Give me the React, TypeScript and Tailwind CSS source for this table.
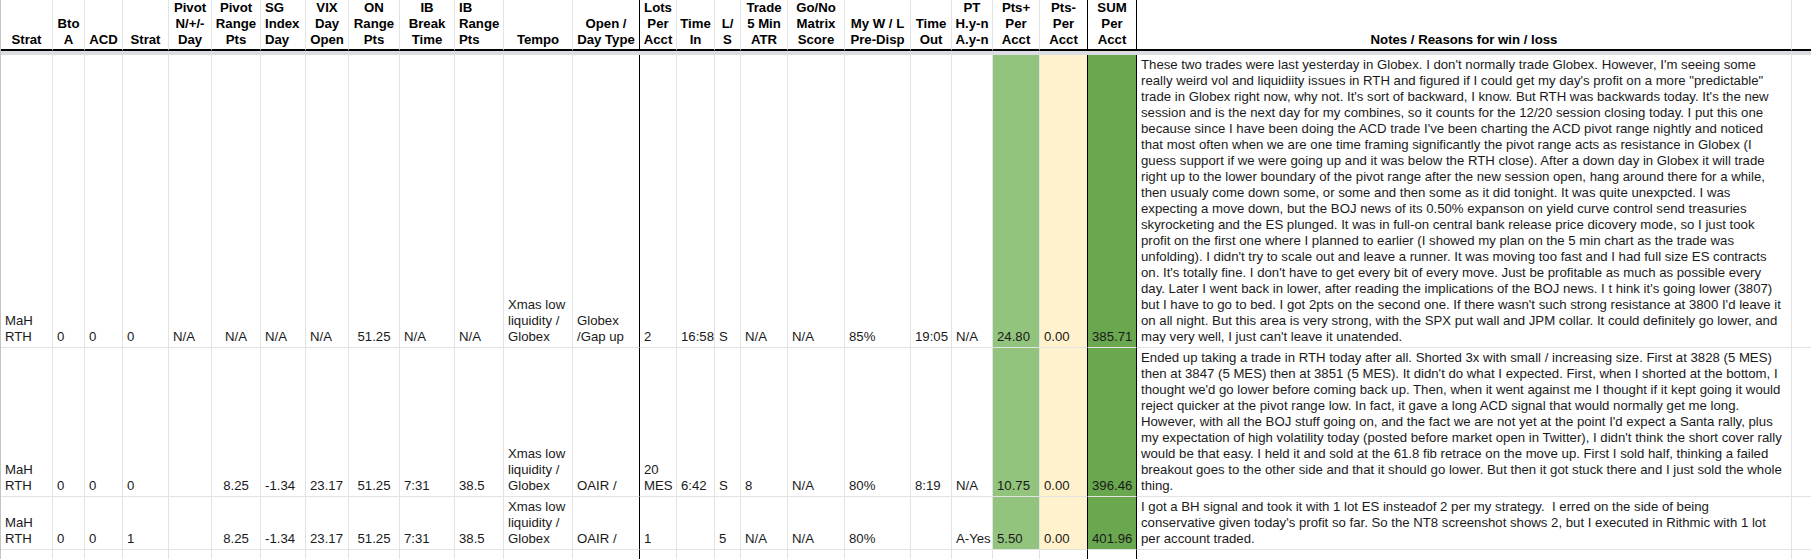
import React from "react";

const colW = [
  "w-[52px]", "w-[32px]", "w-[38px]", "w-[46px]", "w-[43px]", "w-[49px]", "w-[45px]", "w-[43px]",
  "w-[51px]", "w-[55px]", "w-[49px]", "w-[69px]", "w-[67px]", "w-[37px]", "w-[38px]", "w-[26px]",
  "w-[47px]", "w-[57px]", "w-[66px]", "w-[41px]", "w-[41px]", "w-[47px]", "w-[48px]", "w-[49px]",
  "w-[655px]", "w-[20px]",
];

const headers: string[][] = [
  ["Strat"], ["Bto", "A"], ["ACD"], ["Strat"], ["Pivot", "N/+/-", "Day"], ["Pivot", "Range", "Pts"],
  ["SG", "Index", "Day"], ["VIX", "Day", "Open"], ["ON", "Range", "Pts"], ["IB", "Break", "Time"],
  ["IB", "Range", "Pts"], ["Tempo"], ["Open /", "Day Type"], ["Lots", "Per", "Acct"], ["Time", "In"],
  ["L/", "S"], ["Trade", "5 Min", "ATR"], ["Go/No", "Matrix", "Score"], ["My W / L", "Pre-Disp"],
  ["Time", "Out"], ["PT", "H.y-n", "A.y-n"], ["Pts+", "Per", "Acct"], ["Pts-", "Per", "Acct"],
  ["SUM", "Per", "Acct"], ["Notes / Reasons for win / loss"], [],
];

const xmas = ["Xmas low", "liquidity /", "Globex"];

const notes1 = [
  "These two trades were last yesterday in Globex. I don't normally trade Globex. However, I'm seeing some",
  'really weird vol and liquidiity issues in RTH and figured if I could get my day\'s profit on a more "predictable"',
  "trade in Globex right now, why not. It's sort of backward, I know. But RTH was backwards today. It's the new",
  "session and is the next day for my combines, so it counts for the 12/20 session closing today. I put this one",
  "because since I have been doing the ACD trade I've been charting the ACD pivot range nightly and noticed",
  "that most often when we are one time framing significantly the pivot range acts as resistance in Globex (I",
  "guess support if we were going up and it was below the RTH close). After a down day in Globex it will trade",
  "right up to the lower boundary of the pivot range after the new session open, hang around there for a while,",
  "then usualy come down some, or some and then some as it did tonight. It was quite unexpcted. I was",
  "expecting a move down, but the BOJ news of its 0.50% expanson on yield curve control send treasuries",
  "skyrocketing and the ES plunged. It was in full-on central bank release price dicovery mode, so I just took",
  "profit on the first one where I planned to earlier (I showed my plan on the 5 min chart as the trade was",
  "unfolding). I didn't try to scale out and leave a runner. It was moving too fast and I had full size ES contracts",
  "on. It's totally fine. I don't have to get every bit of every move. Just be profitable as much as possible every",
  "day. Later I went back in lower, after reading the implications of the BOJ news. I t hink it's going lower (3807)",
  "but I have to go to bed. I got 2pts on the second one. If there wasn't such strong resistance at 3800 I'd leave it",
  "on all night. But this area is very strong, with the SPX put wall and JPM collar. It could definitely go lower, and",
  "may very well, I just can't leave it unatended.",
];

const notes2 = [
  "Ended up taking a trade in RTH today after all. Shorted 3x with small / increasing size. First at 3828 (5 MES)",
  "then at 3847 (5 MES) then at 3851 (5 MES). It didn't do what I expected. First, when I shorted at the bottom, I",
  "thought we'd go lower before coming back up. Then, when it went against me I thought if it kept going it would",
  "reject quicker at the pivot range low. In fact, it gave a long ACD signal that would normally get me long.",
  "However, with all the BOJ stuff going on, and the fact we are not yet at the point I'd expect a Santa rally, plus",
  "my expectation of high volatility today (posted before market open in Twitter), I didn't think the short cover rally",
  "would be that easy. I held it and sold at the 61.8 fib retrace on the move up. First I sold half, thinking a failed",
  "breakout goes to the other side and that it should go lower. But then it got stuck there and I just sold the whole",
  "thing.",
];

const notes3 = [
  "I got a BH signal and took it with 1 lot ES insteadof 2 per my strategy.  I erred on the side of being",
  "conservative given today's profit so far. So the NT8 screenshot shows 2, but I executed in Rithmic with 1 lot",
  "per account traded.",
];

type Cell = string | string[];

const rows: Cell[][] = [
  [
    ["MaH", "RTH"], "0", "0", "0", "N/A", "N/A", "N/A", "N/A", "51.25", "N/A", "N/A", xmas,
    ["Globex", "/Gap up"], "2", "16:58", "S", "N/A", "N/A", "85%", "19:05", "N/A", "24.80", "0.00",
    "385.71", notes1, "",
  ],
  [
    ["MaH", "RTH"], "0", "0", "0", "", "8.25", "-1.34", "23.17", "51.25", "7:31", "38.5", xmas,
    "OAIR /", ["20", "MES"], "6:42", "S", "8", "N/A", "80%", "8:19", "N/A", "10.75", "0.00",
    "396.46", notes2, "",
  ],
  [
    ["MaH", "RTH"], "0", "0", "1", "", "8.25", "-1.34", "23.17", "51.25", "7:31", "38.5", xmas,
    "OAIR /", "1", "", "5", "N/A", "N/A", "80%", "", "A-Yes", "5.50", "0.00", "401.96", notes3, "",
  ],
];

function rightBorder(i: number) {
  return i === 12 || i === 22 || i === 23 ? "border-r-black" : "border-r-[#e2e3e3]";
}

function bodyBg(i: number) {
  if (i === 21) return "bg-[#93c47d]";
  if (i === 22) return "bg-[#fff2cc]";
  if (i === 23) return "bg-[#6aa84f]";
  return "";
}

function Lines({ v }: { v: Cell }) {
  if (Array.isArray(v)) {
    return (
      <>
        {v.map((l, k) => (
          <div key={k} className="whitespace-pre">
            {l}
          </div>
        ))}
      </>
    );
  }
  return <div className="whitespace-pre">{v}</div>;
}

export default function App() {
  return (
    <div className="w-[1811px] h-[559px] overflow-hidden bg-white font-['Liberation_Sans',Arial,sans-serif] text-[13.2px] leading-[16px] text-[#1a1a1a]">
      <table className="table-fixed border-separate border-spacing-0 w-[1811px] border-l border-l-[#c4c4c4]">
        <colgroup>
          {colW.map((c, i) => (
            <col key={i} className={c} />
          ))}
        </colgroup>
        <thead>
          <tr className="h-[50px]">
            {headers.map((h, i) => (
              <th
                key={i}
                className={`border-r border-b-2 ${rightBorder(i)} border-b-black align-bottom font-bold text-black px-[2px] pb-[1px] whitespace-nowrap overflow-hidden ${
                  i === 6 || i === 10 ? "text-left pl-[4px]" : "text-center"
                }`}
              >
                <Lines v={h} />
              </th>
            ))}
          </tr>
          <tr>
            <td colSpan={26} className="h-[4px] p-0 bg-[#dadde2]"></td>
          </tr>
        </thead>
        <tbody>
          {rows.map((r, ri) => (
            <tr key={ri}>
              {r.map((v, i) => (
                <td
                  key={i}
                  className={`border-r border-b ${rightBorder(i)} border-b-[#e2e3e3] align-bottom px-[4px] pt-[2px] pb-[2px] whitespace-nowrap overflow-hidden ${bodyBg(
                    i
                  )} ${i === 5 || i === 8 ? "text-center" : "text-left"}`}
                >
                  <Lines v={v} />
                </td>
              ))}
            </tr>
          ))}
          <tr className="h-[30px]">
            {colW.map((_, i) => (
              <td key={i} className={`border-r border-b ${rightBorder(i)} border-b-[#e2e3e3]`}></td>
            ))}
          </tr>
        </tbody>
      </table>
    </div>
  );
}
